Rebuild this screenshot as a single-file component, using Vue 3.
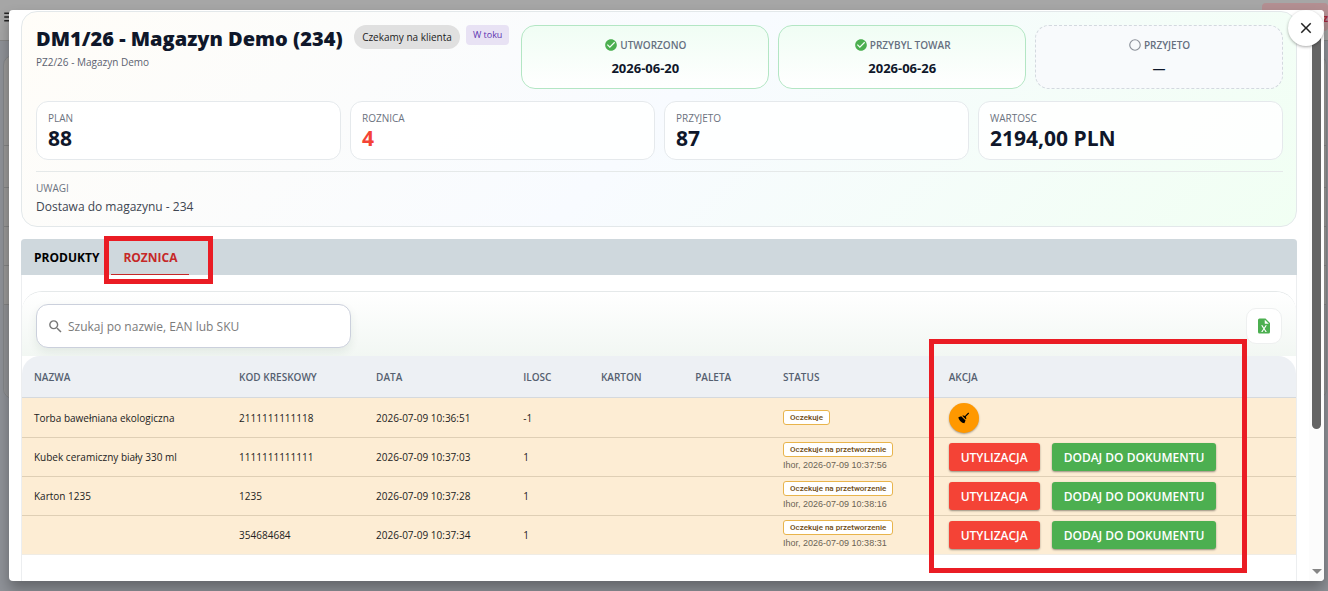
<script setup>
import { ref } from 'vue'

const query = ref('')

const steps = [
  { label: 'UTWORZONO', value: '2026-06-20', done: true },
  { label: 'PRZYBYL TOWAR', value: '2026-06-26', done: true },
  { label: 'PRZYJETO', value: '—', done: false }
]

const stats = [
  { label: 'PLAN', value: '88' },
  { label: 'ROZNICA', value: '4', alert: true },
  { label: 'PRZYJETO', value: '87' },
  { label: 'WARTOSC', value: '2194,00 PLN' }
]

const columns = [
  { key: 'name', label: 'NAZWA' },
  { key: 'code', label: 'KOD KRESKOWY' },
  { key: 'date', label: 'DATA' },
  { key: 'qty', label: 'ILOSC' },
  { key: 'box', label: 'KARTON' },
  { key: 'pallet', label: 'PALETA' },
  { key: 'status', label: 'STATUS' },
  { key: 'action', label: 'AKCJA' }
]

const rows = [
  { name: 'Torba bawełniana ekologiczna', code: '2111111111118', date: '2026-07-09 10:36:51', qty: '-1', status: 'Oczekuje', by: '' },
  { name: 'Kubek ceramiczny biały 330 ml', code: '1111111111111', date: '2026-07-09 10:37:03', qty: '1', status: 'Oczekuje na przetworzenie', by: 'Ihor, 2026-07-09 10:37:56' },
  { name: 'Karton 1235', code: '1235', date: '2026-07-09 10:37:28', qty: '1', status: 'Oczekuje na przetworzenie', by: 'Ihor, 2026-07-09 10:38:16' },
  { name: '', code: '354684684', date: '2026-07-09 10:37:34', qty: '1', status: 'Oczekuje na przetworzenie', by: 'Ihor, 2026-07-09 10:38:31' }
]
</script>

<template>
  <div class="page">
    <div class="appbar">
      <svg class="menu-icon" viewBox="0 0 24 24" aria-hidden="true"><path d="M3,6H21V8H3V6M3,11H21V13H3V11M3,16H21V18H3V16Z" /></svg>
      <span class="alert-chip">
        <svg viewBox="0 0 24 24" aria-hidden="true"><circle cx="12" cy="12" r="9" fill="none" stroke="currentColor" stroke-width="2" /></svg>
        <b>z</b>
      </span>
    </div>
    <div class="back-card">
      <div v-for="n in 5" :key="n" class="back-row"></div>
    </div>

    <div class="dialog" role="dialog" aria-label="DM1/26 - Magazyn Demo (234)">
      <div class="content">
        <section class="summary">
          <div class="summary-top">
            <div class="heading">
              <div class="heading-line">
                <h1>DM1/26 - Magazyn Demo (234)</h1>
                <span class="chip-client">Czekamy na klienta</span>
                <span class="chip-progress">W toku</span>
              </div>
              <p class="subtitle">PZ2/26 - Magazyn Demo</p>
            </div>
            <div class="steps">
              <div v-for="s in steps" :key="s.label" class="step" :class="{ done: s.done }">
                <div class="step-label">
                  <svg v-if="s.done" class="ok" viewBox="0 0 24 24" aria-hidden="true"><path d="M12 2C6.5 2 2 6.5 2 12S6.5 22 12 22 22 17.5 22 12 17.5 2 12 2M10 17L5 12L6.41 10.59L10 14.17L17.59 6.58L19 8L10 17Z" /></svg>
                  <svg v-else class="open" viewBox="0 0 24 24" aria-hidden="true"><circle cx="12" cy="12" r="9" /></svg>
                  <span>{{ s.label }}</span>
                </div>
                <div class="step-value">{{ s.value }}</div>
              </div>
            </div>
          </div>

          <div class="stats">
            <div v-for="s in stats" :key="s.label" class="stat">
              <div class="small-label">{{ s.label }}</div>
              <div class="stat-value" :class="{ alert: s.alert }">{{ s.value }}</div>
            </div>
          </div>

          <div class="notes">
            <div class="small-label">UWAGI</div>
            <p>Dostawa do magazynu - 234</p>
          </div>
        </section>

        <section class="panel">
          <div class="tabs" role="tablist">
            <button class="tab" role="tab" aria-selected="false">PRODUKTY</button>
            <button class="tab active" role="tab" aria-selected="true">
              ROZNICA
              <span class="mark mark-tab"></span>
            </button>
          </div>

          <div class="table-card">
            <div class="toolbar">
              <label class="search">
                <svg viewBox="0 0 24 24" aria-hidden="true"><path d="M9.5,3A6.5,6.5 0 0,1 16,9.5C16,11.11 15.41,12.59 14.44,13.73L14.71,14H15.5L20.5,19L19,20.5L14,15.5V14.71L13.73,14.44C12.59,15.41 11.11,16 9.5,16A6.5,6.5 0 0,1 3,9.5A6.5,6.5 0 0,1 9.5,3M9.5,5C7,5 5,7 5,9.5C5,12 7,14 9.5,14C12,14 14,12 14,9.5C14,7 12,5 9.5,5Z" /></svg>
                <input v-model="query" type="text" placeholder="Szukaj po nazwie, EAN lub SKU" aria-label="Szukaj po nazwie, EAN lub SKU" />
              </label>
              <button class="excel" aria-label="Excel">
                <svg viewBox="0 0 24 24" aria-hidden="true"><path d="M14,2H6A2,2 0 0,0 4,4V20A2,2 0 0,0 6,22H18A2,2 0 0,0 20,20V8L14,2M15.8,20H14L12,16.6L10,20H8.2L11.1,15.5L8.2,11H10L12,14.4L14,11H15.8L12.9,15.5L15.8,20M13,9V3.5L18.5,9H13Z" /></svg>
              </button>
            </div>

            <div class="table-wrap">
              <table>
                <colgroup>
                  <col v-for="c in columns" :key="c.key" :class="'col-' + c.key" />
                </colgroup>
                <thead>
                  <tr>
                    <th v-for="c in columns" :key="c.key" scope="col">{{ c.label }}</th>
                  </tr>
                </thead>
                <tbody>
                  <tr v-for="r in rows" :key="r.date">
                    <td>{{ r.name }}</td>
                    <td>{{ r.code }}</td>
                    <td>{{ r.date }}</td>
                    <td>{{ r.qty }}</td>
                    <td></td>
                    <td></td>
                    <td>
                      <div class="status">
                        <span class="badge">{{ r.status }}</span>
                        <span v-if="r.by" class="by">{{ r.by }}</span>
                      </div>
                    </td>
                    <td>
                      <div v-if="r.by" class="actions">
                        <button class="btn red">UTYLIZACJA</button>
                        <button class="btn green">DODAJ DO DOKUMENTU</button>
                      </div>
                      <button v-else class="broom" aria-label="Wyczyść">
                        <svg viewBox="0 0 24 24" aria-hidden="true"><path d="M19.36,2.72L20.78,4.14L15.06,9.85C16.13,11.39 16.28,13.24 15.38,14.44L9.06,8.12C10.26,7.22 12.11,7.37 13.65,8.44L19.36,2.72M5.93,17.57C3.92,15.56 2.69,13.16 2.35,10.92L7.23,8.83L14.67,16.27L12.58,21.15C10.34,20.81 7.94,19.58 5.93,17.57Z" /></svg>
                      </button>
                    </td>
                  </tr>
                </tbody>
              </table>
              <span class="mark mark-actions"></span>
            </div>
          </div>
        </section>
      </div>

      <div class="scrollbar" aria-hidden="true">
        <div class="thumb"></div>
        <div class="arrow"></div>
      </div>
      <button class="close" aria-label="Zamknij">
        <svg viewBox="0 0 24 24" aria-hidden="true"><path d="M19,6.41L17.59,5L12,10.59L6.41,5L5,6.41L10.59,12L5,17.59L6.41,19L12,13.41L17.59,19L19,17.59L13.41,12L19,6.41Z" /></svg>
      </button>
    </div>
  </div>
</template>

<style>
body {
  margin: 0;
}
</style>

<style scoped>
* {
  box-sizing: border-box;
}

.page {
  position: relative;
  height: 100vh;
  overflow: hidden;
  background: #8f9298;
  color: #222;
  font-family: "Open Sans", "Noto Sans", sans-serif;
  font-size: 11px;
}

button {
  font: inherit;
  border: 0;
  margin: 0;
  cursor: pointer;
}

h1,
p {
  margin: 0;
}

.appbar {
  display: flex;
  align-items: flex-start;
  justify-content: space-between;
  height: 41px;
  padding-top: 3px;
  background: #a6a6a6;
  border-bottom: 1px solid #858585;
}

.menu-icon {
  width: 18px;
  height: 18px;
  margin: 5px 0 0 2px;
  fill: #222;
}

.alert-chip {
  display: flex;
  align-items: center;
  justify-content: space-between;
  width: 66px;
  height: 28px;
  padding-left: 6px;
  border-radius: 4px;
  background: #b38f92;
  color: #a3283a;
}

.alert-chip svg {
  width: 14px;
  height: 14px;
}

.back-card {
  margin: 14px 1px 0 3px;
  padding-top: 89px;
  border: 1px solid #85878a;
  border-radius: 10px;
  background: #9b9a99;
}

.back-row {
  height: 39px;
  border-top: 1px solid #858585;
}

.back-row:first-child {
  height: 42px;
}

.back-row:last-child {
  height: 94px;
  border-radius: 0 0 10px 10px;
  background: #929396;
}

.dialog {
  position: absolute;
  inset: 10px 4px 10px 9px;
  display: flex;
  overflow: hidden;
  border-radius: 4px;
  background: #fff;
  box-shadow: 0 8px 14px rgba(0, 0, 0, 0.3);
}

.content {
  flex: 1;
  min-width: 0;
  padding: 1px 12px 0 12px;
}

.summary {
  padding: 13px 13px 8px 14px;
  border: 1px solid #e3e8ea;
  border-radius: 16px;
  background: linear-gradient(135deg, #fffdf8 0%, #f8fbff 50%, #f1fff3 100%);
}

.summary-top {
  display: grid;
  grid-template-columns: 23fr 37fr;
  gap: 12px;
}

.heading-line {
  display: flex;
  align-items: flex-start;
  white-space: nowrap;
}

h1 {
  color: #0f172a;
  font-size: 20px;
  font-weight: 800;
  line-height: 28px;
}

.chip-client {
  margin-left: auto;
  padding: 0 8px;
  border-radius: 12px;
  background: #e0e0e0;
  font-size: 10px;
  line-height: 24px;
}

.chip-progress {
  margin-left: 6px;
  padding: 0 7px;
  border-radius: 4px;
  background: #e8e2f4;
  color: #5e35b1;
  font-size: 9px;
  line-height: 20px;
}

.subtitle {
  color: #5c6270;
  font-size: 10px;
  line-height: 18px;
}

.steps {
  display: grid;
  grid-template-columns: repeat(3, 1fr);
  gap: 9px;
}

.step {
  display: flex;
  flex-direction: column;
  align-items: center;
  height: 64px;
  padding-top: 10px;
  border: 1px dashed #d3d9df;
  border-radius: 14px;
  background: #f8fafc;
}

.step.done {
  border: 1px solid #b3e6c4;
  background: linear-gradient(#f0fdf4, #fff);
}

.step-label {
  display: flex;
  align-items: center;
  gap: 2px;
  color: #667080;
  font-size: 10px;
  font-weight: 600;
  line-height: 18px;
}

.step-label svg {
  width: 14px;
  height: 14px;
}

.ok {
  fill: #4caf50;
}

.open {
  fill: none;
  stroke: #8a8f98;
  stroke-width: 2;
}

.step-value {
  color: #0f172a;
  font-size: 13px;
  font-weight: 700;
  line-height: 28px;
}

.stats {
  display: grid;
  grid-template-columns: repeat(4, 1fr);
  gap: 9px;
  margin-top: 12px;
}

.stat {
  padding: 8px 11px;
  border: 1px solid #e5e9ec;
  border-radius: 12px;
  background: rgba(255, 255, 255, 0.85);
}

.small-label {
  color: #6b7280;
  font-size: 10px;
  line-height: 16px;
}

.stat-value {
  color: #0f172a;
  font-size: 21px;
  font-weight: 700;
  line-height: 25px;
}

.stat-value.alert {
  color: #f44336;
}

.notes {
  margin-top: 11px;
  padding-top: 8px;
  border-top: 1px solid #e5e9e9;
}

.notes p {
  color: #3e4652;
  font-size: 12px;
  line-height: 22px;
}

.panel {
  height: 400px;
  margin-top: 12px;
  border: 1px solid #eceef0;
  border-top: 0;
  border-radius: 4px;
}

.tabs {
  display: flex;
  height: 36px;
  margin: 0 -1px;
  padding-left: 1px;
  border-radius: 4px 4px 0 0;
  background: #cfd8dd;
}

.tab {
  position: relative;
  padding: 0 12px;
  background: none;
  color: #000;
  font-size: 12px;
  font-weight: 700;
}

.tab.active {
  box-shadow: inset 0 -1px #c62828;
  color: #c62828;
}

.mark {
  position: absolute;
  border: 5px solid #ea1c24;
  pointer-events: none;
}

.mark-tab {
  inset: -3px -24px -9px -7px;
}

.table-card {
  margin-top: 16px;
  border-top: 1px solid #e5e9ea;
  border-radius: 20px 20px 0 0;
}

.toolbar {
  display: flex;
  align-items: center;
  justify-content: space-between;
  height: 64px;
  padding: 6px 14px 2px;
  border-radius: 20px 20px 0 0;
  background: linear-gradient(#fff, #f2f7f3);
}

.search {
  display: flex;
  align-items: center;
  gap: 4px;
  width: 315px;
  height: 44px;
  padding: 0 10px;
  border: 1px solid #cbd0dc;
  border-radius: 12px;
  background: #fff;
  box-shadow: 0 4px 10px rgba(20, 60, 40, 0.08);
}

.search svg {
  width: 17px;
  height: 17px;
  fill: #777;
}

.search input {
  flex: 1;
  min-width: 0;
  padding: 0;
  border: 0;
  outline: 0;
  background: none;
  font: inherit;
  font-size: 12px;
}

.search input::placeholder {
  color: #7b7b7b;
  opacity: 1;
}

.excel {
  display: grid;
  place-items: center;
  width: 36px;
  height: 36px;
  padding: 0;
  border: 1px solid #eef0f0;
  border-radius: 10px;
  background: #fff;
}

.excel svg {
  width: 18px;
  height: 18px;
  fill: #4caf50;
}

.table-wrap {
  position: relative;
}

table {
  width: 100%;
  border-collapse: separate;
  border-spacing: 0;
  table-layout: fixed;
}

.col-name { width: 16.1%; }
.col-code { width: 10.75%; }
.col-date { width: 11.55%; }
.col-qty { width: 6.1%; }
.col-box { width: 7.4%; }
.col-pallet { width: 6.9%; }
.col-status { width: 13%; }

th {
  height: 42px;
  padding: 0 12px;
  border-bottom: 1px solid #d5d9dd;
  background: #edf0f4;
  color: #556070;
  font-size: 10px;
  font-weight: 600;
  text-align: left;
  white-space: nowrap;
}

th:first-child {
  border-top-left-radius: 18px;
}

th:last-child {
  border-top-right-radius: 18px;
}

td {
  height: 39px;
  padding: 0 12px;
  border-bottom: 1px solid #dfcfb5;
  background: #fdedd4;
  font-size: 10px;
  white-space: nowrap;
}

tbody tr:first-child td {
  height: 40px;
}

tbody tr:last-child td {
  border-bottom-color: #f0ece4;
}

.status {
  display: flex;
  flex-direction: column;
  align-items: flex-start;
}

.badge {
  padding: 0 6px;
  border: 1px solid #e8b44c;
  border-radius: 3px;
  background: #fff;
  color: #6d4a12;
  font-family: Roboto, sans-serif;
  font-size: 8px;
  font-weight: 500;
  line-height: 13px;
}

.by {
  color: #6b6355;
  font-family: "Liberation Sans", sans-serif;
  font-size: 9px;
  line-height: 16px;
}

.actions {
  display: flex;
  gap: 12px;
}

.btn {
  height: 28px;
  padding: 0 12px;
  border-radius: 3px;
  color: #fff;
  font-size: 12px;
  font-weight: 600;
  box-shadow: 0 1px 2px rgba(0, 0, 0, 0.4);
}

.btn.red {
  background: #f44336;
}

.btn.green {
  background: #4caf50;
}

.broom {
  display: grid;
  place-items: center;
  width: 30px;
  height: 30px;
  padding: 0;
  border-radius: 50%;
  background: #ff9800;
  box-shadow: 0 1px 2px rgba(0, 0, 0, 0.35);
}

.broom svg {
  width: 14px;
  height: 14px;
  fill: #000;
}

.mark-actions {
  top: -17px;
  right: 49px;
  bottom: -18px;
  width: 25%;
}

.scrollbar {
  display: flex;
  flex-direction: column;
  align-items: center;
  justify-content: space-between;
  width: 15px;
  padding: 18px 0 7px;
  background: #fcfcfc;
}

.thumb {
  width: 9px;
  height: 401px;
  border-radius: 5px;
  background: #646464;
}

.arrow {
  border: 5px solid transparent;
  border-top-color: #858585;
  border-bottom: 0;
}

.close {
  position: absolute;
  top: 0;
  right: 0;
  display: grid;
  place-items: center;
  width: 36px;
  height: 36px;
  padding: 0;
  border-radius: 50%;
  background: #fff;
  box-shadow: 0 1px 3px rgba(0, 0, 0, 0.35);
}

.close svg {
  width: 18px;
  height: 18px;
  fill: #222;
}
</style>
